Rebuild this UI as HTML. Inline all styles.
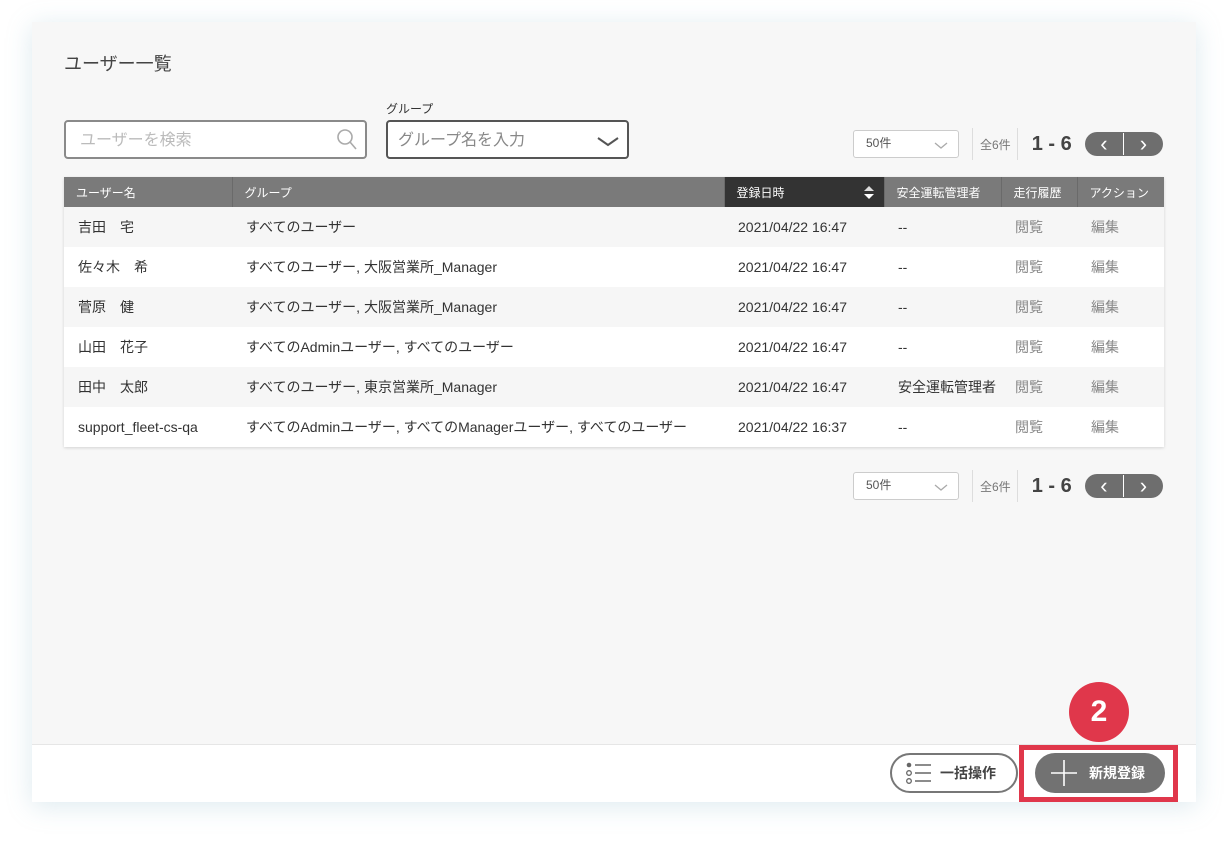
<!DOCTYPE html>
<html><head><meta charset="utf-8"><style>
*{box-sizing:border-box;margin:0;padding:0}
body{width:1228px;height:844px;background:#fff;font-family:"Liberation Sans","Noto Sans CJK JP",sans-serif;color:#333;position:relative;overflow:hidden}
.panel{position:absolute;left:32px;top:22px;width:1164px;height:780px;background:#f7f7f7;box-shadow:0 4px 24px rgba(120,170,190,.25)}
.footer{position:absolute;left:0;top:722px;width:1164px;height:58px;background:#fff;border-top:1px solid #e6e6e6}
.abs{position:absolute}
h1{position:absolute;left:32px;top:28px;font-size:18px;font-weight:normal;color:#444}
.search{left:32px;top:98px;width:303px;height:39px;border:2px solid #8a8a8a;border-radius:4px;background:#fff;font-size:16px;color:#bbb;padding:4px 0 0 14px}
.grp{left:354px;top:98px;width:243px;height:39px;border:2px solid #555;border-radius:4px;background:#fff;font-size:16px;color:#888;padding:4px 0 0 10px}
.lbl{left:354px;top:78px;font-size:12px;color:#333}
table{position:absolute;left:32px;top:155px;width:1100px;border-collapse:collapse;font-size:14px;box-shadow:0 1px 3px rgba(0,0,0,.15)}
th{background:#7a7a7a;color:#fff;font-weight:normal;font-size:12px;text-align:left;height:30px;padding-left:12px;border-right:1px solid #6a6a6a}
th.sort{background:#333}
td{height:40px;padding-left:14px;white-space:nowrap}
tr:nth-child(even) td{background:#f6f6f6}
tr:nth-child(odd) td{background:#fff}
td.g{color:#888}
.pg{font-size:12px}
.sel{width:106px;height:28px;border:1px solid #ccc;border-radius:3px;background:#fff;padding:3px 0 0 12px;color:#555}
.nav{width:78px;height:24px;border-radius:12px;background:#6e6e6e;display:flex;color:#fff;font-size:22px;align-items:center}
.nav span{flex:1;text-align:center;line-height:22px}
.nav span:first-child{border-right:1px solid #fff}
.btn{border-radius:20px;height:40px;top:8px;display:flex;align-items:center;font-size:14px;font-weight:bold}
</style></head><body>
<div class="panel">
<h1>ユーザー一覧</h1>
<div class="abs lbl">グループ</div>
<div class="abs search">ユーザーを検索
<svg class="abs" style="left:270px;top:6px" width="22" height="24" viewBox="0 0 22 24"><circle cx="9" cy="9" r="7" fill="none" stroke="#aaa" stroke-width="1.6"/><line x1="14" y1="14" x2="20" y2="21" stroke="#aaa" stroke-width="1.6"/></svg></div>
<div class="abs grp">グループ名を入力
<svg class="abs" style="left:208px;top:14px" width="24" height="12"><polyline points="2,2 12,9 22,2" fill="none" stroke="#555" stroke-width="2"/></svg></div>

<div class="abs pg" style="left:821px;top:106px;display:flex;align-items:center">
<div class="sel" style="position:relative">50件<svg class="abs" style="left:80px;top:11px" width="14" height="8"><polyline points="1,1 7,6 13,1" fill="none" stroke="#aaa" stroke-width="1.3"/></svg></div>
<div style="width:1px;height:32px;background:#ddd;margin:0 7px 0 13px"></div>
<div style="color:#777">全6件</div>
<div style="width:1px;height:32px;background:#ddd;margin:0 14px 0 6px"></div>
<div style="font-size:20px;font-weight:bold;color:#444;margin-right:13px">1 - 6</div>
<div class="nav"><span>‹</span><span>›</span></div></div>

<table>
<tr><th style="width:168px">ユーザー名</th><th style="width:492px">グループ</th><th class="sort" style="width:160px;position:relative">登録日時<svg class="abs" style="right:10px;top:9px" width="10" height="13"><polygon points="5,0 10,5 0,5" fill="#ddd"/><polygon points="5,13 10,8 0,8" fill="#fff"/></svg></th><th style="width:117px">安全運転管理者</th><th style="width:76px">走行履歴</th><th style="border-right:0">アクション</th></tr>
<tr><td>吉田　宅</td><td>すべてのユーザー</td><td>2021/04/22 16:47</td><td>--</td><td class="g">閲覧</td><td class="g">編集</td></tr>
<tr><td>佐々木　希</td><td>すべてのユーザー, 大阪営業所_Manager</td><td>2021/04/22 16:47</td><td>--</td><td class="g">閲覧</td><td class="g">編集</td></tr>
<tr><td>菅原　健</td><td>すべてのユーザー, 大阪営業所_Manager</td><td>2021/04/22 16:47</td><td>--</td><td class="g">閲覧</td><td class="g">編集</td></tr>
<tr><td>山田　花子</td><td>すべてのAdminユーザー, すべてのユーザー</td><td>2021/04/22 16:47</td><td>--</td><td class="g">閲覧</td><td class="g">編集</td></tr>
<tr><td>田中　太郎</td><td>すべてのユーザー, 東京営業所_Manager</td><td>2021/04/22 16:47</td><td>安全運転管理者</td><td class="g">閲覧</td><td class="g">編集</td></tr>
<tr><td>support_fleet-cs-qa</td><td>すべてのAdminユーザー, すべてのManagerユーザー, すべてのユーザー</td><td>2021/04/22 16:37</td><td>--</td><td class="g">閲覧</td><td class="g">編集</td></tr>
</table>

<div class="abs pg" style="left:821px;top:448px;display:flex;align-items:center">
<div class="sel" style="position:relative">50件<svg class="abs" style="left:80px;top:11px" width="14" height="8"><polyline points="1,1 7,6 13,1" fill="none" stroke="#aaa" stroke-width="1.3"/></svg></div>
<div style="width:1px;height:32px;background:#ddd;margin:0 7px 0 13px"></div>
<div style="color:#777">全6件</div>
<div style="width:1px;height:32px;background:#ddd;margin:0 14px 0 6px"></div>
<div style="font-size:20px;font-weight:bold;color:#444;margin-right:13px">1 - 6</div>
<div class="nav"><span>‹</span><span>›</span></div></div>

<div class="abs" style="left:1037px;top:660px;width:60px;height:60px;border-radius:50%;background:#e0374b;color:#fff;font-size:30px;font-weight:bold;text-align:center;line-height:60px">2</div>

<div class="footer">
<div class="abs btn" style="left:858px;top:8px;width:128px;border:2px solid #777;color:#444;background:#fff">
<svg style="margin:0 8px 0 14px" width="26" height="22"><circle cx="3" cy="3" r="2.3" fill="#666"/><circle cx="3" cy="11" r="2.3" fill="none" stroke="#666" stroke-width="1.3"/><circle cx="3" cy="19" r="2.3" fill="none" stroke="#666" stroke-width="1.3"/><line x1="9" y1="3" x2="25" y2="3" stroke="#666" stroke-width="1.5"/><line x1="9" y1="11" x2="25" y2="11" stroke="#666" stroke-width="1.5"/><line x1="9" y1="19" x2="25" y2="19" stroke="#666" stroke-width="1.5"/></svg>一括操作</div>
<div class="abs" style="left:987px;top:0px;width:159px;height:57px;border:5px solid #e0374b"></div>
<div class="abs btn" style="left:1003px;top:8px;width:130px;background:#727272;color:#fff">
<svg style="margin:0 12px 0 16px" width="26" height="26"><line x1="0" y1="13" x2="26" y2="13" stroke="#fff" stroke-width="1.6"/><line x1="13" y1="0" x2="13" y2="26" stroke="#fff" stroke-width="1.6"/></svg>新規登録</div>
</div>
</div>
</body></html>
